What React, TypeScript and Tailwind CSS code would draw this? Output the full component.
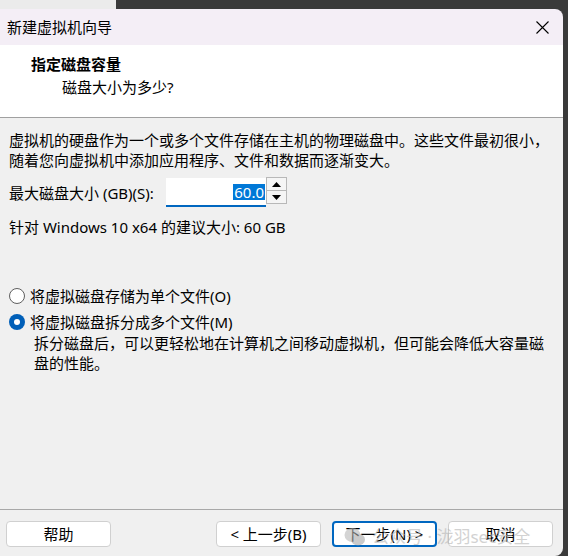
const font = { fontFamily: '"Noto Sans", "Noto Sans CJK SC", sans-serif' }

const Radio = ({ checked }: { checked?: boolean }) =>
    checked ? (
        <span className="w-[16px] h-[16px] rounded-full bg-[#005fb8] flex items-center justify-center shrink-0">
            <span className="w-[6px] h-[6px] rounded-full bg-white" />
        </span>
    ) : (
        <span className="w-[16px] h-[16px] rounded-full border border-[#5f5f5f] bg-white shrink-0" />
    )

const Button = ({ label, focused }: { label: string; focused?: boolean }) => (
    <button
        className={
            focused
                ? 'w-[105px] h-[26px] rounded-[4px] bg-white border-2 border-[#0067c0] text-[15px] leading-none text-black'
                : 'w-[105px] h-[26px] rounded-[4px] bg-white border border-[#d0d0d0] text-[15px] leading-none text-black'
        }
    >
        {label}
    </button>
)

const App = () => {
    return (
        <div className="w-[568px] h-[556px] bg-[#3a3a3a] flex flex-col overflow-hidden relative" style={font}>
            <div className="h-[9px] flex shrink-0">
                <div className="w-[116px] bg-[#ebebeb]" />
                <div className="flex-1 bg-[#3a3a3a]" />
            </div>
            <div className="w-[563px] flex-1 flex flex-col rounded-tr-[8px] rounded-br-[8px] overflow-hidden">
                {/* title bar */}
                <div className="h-[36px] bg-[#f4eef6] flex items-center justify-between pl-[7px] pr-[14px] shrink-0">
                    <span className="text-[15px] text-black">新建虚拟机向导</span>
                    <svg width="13" height="13" viewBox="0 0 13 13">
                        <path d="M0.5 0.5 L12.5 12.5 M12.5 0.5 L0.5 12.5" stroke="#000" strokeWidth="1.1" />
                    </svg>
                </div>
                {/* header */}
                <div className="h-[73px] bg-white border-b border-[#a0a0a0] pt-[9px] shrink-0">
                    <div className="pl-[31px] text-[15px] font-bold leading-[20px] text-black">指定磁盘容量</div>
                    <div className="pl-[62px] mt-[3px] text-[15px] leading-[20px] text-black">磁盘大小为多少?</div>
                </div>
                {/* body */}
                <div className="flex-1 bg-[#f0f0f0] px-[9px] pt-[12px] text-[15px] leading-[20px] text-black">
                    <p>虚拟机的硬盘作为一个或多个文件存储在主机的物理磁盘中。这些文件最初很小，</p>
                    <p>随着您向虚拟机中添加应用程序、文件和数据而逐渐变大。</p>
                    <div className="flex items-center mt-[8px] h-[29px]">
                        <span className="w-[157px]">最大磁盘大小 (GB)(S):</span>
                        <div className="w-[100px] h-[29px] bg-white border-b-2 border-[#0067c0] flex items-center justify-end pr-[1px]">
                            <span className="bg-[#0078d7] text-white leading-[16px] px-[1px]">60.0</span>
                        </div>
                        <div className="w-[21px] h-[27px] flex flex-col border border-[#b8b8b8] self-start -mt-[1px] bg-[#f0f0f0]">
                            <div className="flex-1 flex items-center justify-center border-b border-[#b8b8b8] bg-[#f5f5f5]">
                                <svg width="9" height="5" viewBox="0 0 9 5"><path d="M4.5 0 L9 5 L0 5 Z" fill="#000" /></svg>
                            </div>
                            <div className="flex-1 flex items-center justify-center bg-[#f5f5f5]">
                                <svg width="9" height="5" viewBox="0 0 9 5"><path d="M0 0 L9 0 L4.5 5 Z" fill="#000" /></svg>
                            </div>
                        </div>
                    </div>
                    <p className="mt-[10px]">针对 Windows 10 x64 的建议大小: 60 GB</p>
                    <div className="mt-[49px] flex items-center gap-[5px] h-[20px]">
                        <Radio />
                        <span>将虚拟磁盘存储为单个文件(O)</span>
                    </div>
                    <div className="mt-[6px] flex items-center gap-[5px] h-[20px]">
                        <Radio checked />
                        <span>将虚拟磁盘拆分成多个文件(M)</span>
                    </div>
                    <div className="pl-[25px] mt-[1px]">
                        <p>拆分磁盘后，可以更轻松地在计算机之间移动虚拟机，但可能会降低大容量磁</p>
                        <p>盘的性能。</p>
                    </div>
                </div>
                {/* footer */}
                <div className="h-[47px] bg-[#f0f0f0] border-t border-[#a8a8a8] flex items-start pt-[11px] pl-[6px] pr-[10px] shrink-0 relative">
                    <Button label="帮助" />
                    <div className="ml-auto flex gap-[11px]">
                        <Button label="< 上一步(B)" />
                        <Button label="下一步(N) >" focused />
                    </div>
                    <div className="ml-[11px]">
                        <Button label="取消" />
                    </div>
                    {/* watermark */}
                    <div className="absolute left-[344px] top-[14px] flex items-center gap-[6px] pointer-events-none opacity-60">
                        <svg width="22" height="20" viewBox="0 0 22 20">
                            <ellipse cx="8.5" cy="8" rx="8" ry="7" fill="#b8b8b8" />
                            <ellipse cx="14" cy="12.5" rx="7" ry="6" fill="#a8a8a8" />
                        </svg>
                        <span className="text-[17px] text-[#b5b5b5] whitespace-nowrap">公众号 · 泷羽sec安全</span>
                    </div>
                </div>
            </div>
        </div>
    )
}

export default App
